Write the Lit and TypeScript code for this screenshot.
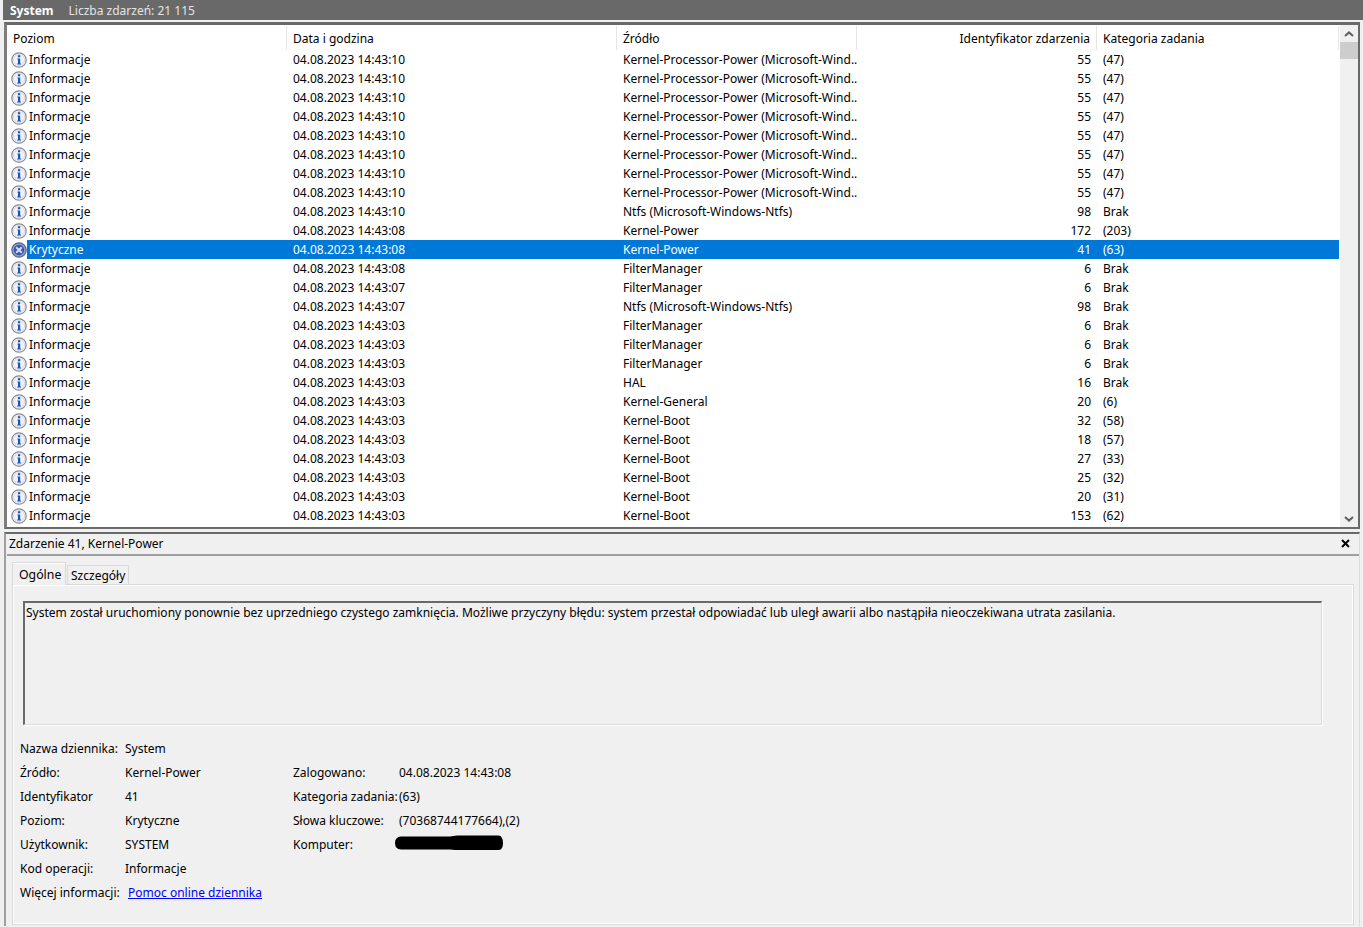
import { LitElement, html, css, svg } from "lit";
import { customElement } from "lit/decorators.js";

type Row = [string, string, string, string, string];
const P = "Kernel-Processor-Power (Microsoft-Wind...";
const N = "Ntfs (Microsoft-Windows-Ntfs)";
const F = "FilterManager";
const B = "Kernel-Boot";
const T0 = "04.08.2023 14:43:";
const rows: Row[] = [
  ...Array.from({ length: 8 }, (): Row => ["i", T0 + "10", P, "55", "(47)"]),
  ["i", T0 + "10", N, "98", "Brak"],
  ["i", T0 + "08", "Kernel-Power", "172", "(203)"],
  ["c", T0 + "08", "Kernel-Power", "41", "(63)"],
  ["i", T0 + "08", F, "6", "Brak"],
  ["i", T0 + "07", F, "6", "Brak"],
  ["i", T0 + "07", N, "98", "Brak"],
  ["i", T0 + "03", F, "6", "Brak"],
  ["i", T0 + "03", F, "6", "Brak"],
  ["i", T0 + "03", F, "6", "Brak"],
  ["i", T0 + "03", "HAL", "16", "Brak"],
  ["i", T0 + "03", "Kernel-General", "20", "(6)"],
  ["i", T0 + "03", B, "32", "(58)"],
  ["i", T0 + "03", B, "18", "(57)"],
  ["i", T0 + "03", B, "27", "(33)"],
  ["i", T0 + "03", B, "25", "(32)"],
  ["i", T0 + "03", B, "20", "(31)"],
  ["i", T0 + "03", B, "153", "(62)"],
];

const infoIcon = svg`<svg class="ico" width="16" height="16" viewBox="0 0 16 16">
  <circle cx="8" cy="8" r="7.2" fill="#fdfdfd" stroke="#8a8a8a" stroke-width="1.2"/>
  <circle cx="8" cy="8" r="5.6" fill="#eef2fa" stroke="#c9d2e4" stroke-width=".8"/>
  <rect x="6.9" y="3.2" width="2.3" height="2.1" fill="#1c55b8"/>
  <path d="M6.4 6.4H9.2V11.4H10V12.5H6.2V11.4H7V7.5H6.4Z" fill="#1c55b8"/>
</svg>`;
const critIcon = svg`<svg class="ico" width="16" height="16" viewBox="0 0 16 16">
  <circle cx="8" cy="8" r="7.2" fill="#8ea0c8" stroke="#5d6480" stroke-width="1.2"/>
  <circle cx="8" cy="8" r="5.2" fill="#3b55b0"/>
  <path d="M5.2 5.2L10.8 10.8M10.8 5.2L5.2 10.8" stroke="#d4dcf4" stroke-width="2"/>
</svg>`;

@customElement("app-root")
export class AppRoot extends LitElement {
  static styles = css`
    :host {
      display: block;
      width: 1363px;
      height: 927px;
      overflow: hidden;
      background: #f0f0f0;
      font-family: "Noto Sans", "Open Sans", sans-serif;
      font-size: 12px;
      color: #000;
      box-sizing: border-box;
      padding-left: 3px;
    }
    * { box-sizing: border-box; }
    .title {
      height: 20px;
      background: #696969;
      color: #fff;
      display: flex;
      align-items: center;
      padding-left: 7px;
      gap: 15px;
      border-bottom: 0;
      margin-right: 0;
    }
    .title b { font-weight: 700; }
    .title span { color: #e4e4e4; }
    .list {
      margin-top: 2px;
      height: 507px;
      margin-right: 2px;
      border: solid #696969;
      border-width: 3px 2px 2px 3px;
      border-left-color: #7d7d7d;
      background: #fff;
      display: flex;
      margin-left: 1px;
      margin-right: 3px;
    }
    .table { flex: 1; min-width: 0; padding-top: 1px; }
    .head, .row {
      display: grid;
      grid-template-columns: 280px 330px 240px 240px 1fr;
    }
    .head { height: 24px; align-items: center; }
    .head div {
      height: 24px;
      display: flex;
      align-items: center;
      padding-left: 6px;
      border-right: 1px solid #e5e5e5;
    }
    .head .num { justify-content: flex-end; padding-right: 6px; }
    .row { height: 19px; align-items: center; white-space: nowrap; }
    .row > div { padding-left: 6px; overflow: hidden; }
    .row .num { text-align: right; padding-right: 6px; }
    .row .lvl {
      display: flex;
      align-items: center;
      padding-left: 4px;
      height: 19px;
      gap: 2px;
      overflow: visible;
    }
    .ico { flex: none; }
    .sel { background: #0078d7; color: #fff; }
    .sel .lvl { background: linear-gradient(to right, #fff 20px, transparent 20px); }
    .row.sel .lvl span { color: #fff; }
    .scroll {
      width: 18px;
      flex: none;
      background: #f0f0f0;
      display: flex;
      flex-direction: column;
      margin-left: 1px;
    }
    .arrow { height: 17px; display: flex; align-items: center; justify-content: center; }
    .thumb { height: 17px; background: #cdcdcd; margin-right: 0; }
    .gap { flex: 1; }
    .detail {
      margin-top: 3px;
      margin-left: 1px;
      margin-right: 3px;
      height: 394px;
      border-top: 2px solid #696969;
      border-left: 2px solid #a0a0a0;
      border-right: 1px solid #dcdcdc;
      padding: 0 0 0 1px;
      position: relative;
    }
    .dhead {
      height: 22px;
      border-bottom: 2px solid #a0a0a0;
      display: flex;
      align-items: center;
      justify-content: space-between;
      padding: 0 9px 1px 2px;
      margin-right: 0;
      margin-left: 0;
    }
    .close { display: block; }
    .tabs { display: flex; margin: 6px 0 0 5px; align-items: flex-end; height: 23px; position: relative; z-index: 1; }
    .tab {
      height: 20px;
      padding: 0 3px;
      border: 1px solid #d9d9d9;
      border-bottom: 0;
      display: flex;
      align-items: center;
      margin-left: 1px;
    }
    .tab.on {
      height: 23px;
      width: 54px;
      margin-left: 0;
      padding: 0 6px;
      background: #f0f0f0;
      border-color: #d9d9d9;
      border-width: 1px 1px 0 1px;
      font-size: 12.3px;
      box-shadow: inset 0 1px 0 #fff;
    }
    .page {
      margin: -1px 5px 0 5px;
      height: 341px;
      border: 1px solid #d9d9d9;
      outline: 1px solid #fff;
      outline-offset: -2px;
      padding: 16px 31px 0 10px;
    }
    .msg {
      height: 124px;
      border: solid;
      border-width: 2px 1px 1px 2px;
      border-color: #696969 #dcdcdc #dcdcdc #696969;
      box-shadow: 1px 1px 0 #fff;
      padding: 1px 0 0 1px;
      line-height: 17px;
    }
    .meta {
      margin: 11px 0 0 -3px;
      display: grid;
      grid-template-columns: 105px 168px 106px auto;
      grid-auto-rows: 24px;
      align-items: center;
      justify-content: start;
    }
    a { color: #0000ff; text-decoration: underline; margin-left: 3px; white-space: nowrap; }
    .blob { display: block; margin: -2px 0 0 -4px; }
  `;

  private field(l: string, v: unknown) {
    return html`<div>${l}</div><div>${v}</div>`;
  }

  render() {
    return html`
      <div class="title"><b>System</b><span>Liczba zdarzeń: 21 115</span></div>
      <div class="list">
        <div class="table">
          <div class="head">
            <div>Poziom</div><div>Data i godzina</div><div>Źródło</div>
            <div class="num">Identyfikator zdarzenia</div><div>Kategoria zadania</div>
          </div>
          ${rows.map(
            (r) => html`<div class="row ${r[0] === "c" ? "sel" : ""}">
              <div class="lvl">${r[0] === "c" ? critIcon : infoIcon}<span>${r[0] === "c" ? "Krytyczne" : "Informacje"}</span></div>
              <div>${r[1]}</div><div>${r[2]}</div><div class="num">${r[3]}</div><div>${r[4]}</div>
            </div>`
          )}
        </div>
        <div class="scroll">
          <div class="arrow"><svg width="10" height="6" viewBox="0 0 10 6"><path d="M1 5L5 1.4L9 5" fill="none" stroke="#606060" stroke-width="2"/></svg></div>
          <div class="thumb"></div>
          <div class="gap"></div>
          <div class="arrow"><svg width="10" height="6" viewBox="0 0 10 6"><path d="M1 1L5 4.6L9 1" fill="none" stroke="#606060" stroke-width="2"/></svg></div>
        </div>
      </div>
      <div class="detail">
        <div class="dhead">
          <span>Zdarzenie 41, Kernel-Power</span>
          <svg class="close" width="9" height="9" viewBox="0 0 9 9"><path d="M1 1L8 8M8 1L1 8" stroke="#000" stroke-width="2"/></svg>
        </div>
        <div class="tabs">
          <div class="tab on">Ogólne</div>
          <div class="tab">Szczegóły</div>
        </div>
        <div class="page">
          <div class="msg">System został uruchomiony ponownie bez uprzedniego czystego zamknięcia. Możliwe przyczyny błędu: system przestał odpowiadać lub uległ awarii albo nastąpiła nieoczekiwana utrata zasilania.</div>
          <div class="meta">
            ${this.field("Nazwa dziennika:", "System")}<div></div><div></div>
            ${this.field("Źródło:", "Kernel-Power")}${this.field("Zalogowano:", "04.08.2023 14:43:08")}
            ${this.field("Identyfikator", "41")}${this.field("Kategoria zadania:", "(63)")}
            ${this.field("Poziom:", "Krytyczne")}${this.field("Słowa kluczowe:", "(70368744177664),(2)")}
            ${this.field("Użytkownik:", "SYSTEM")}${this.field(
              "Komputer:",
              svg`<svg class="blob" width="108" height="16" viewBox="0 0 108 16"><path d="M6 1.5H55L62 .5H104Q108 1.5 108 8T104 15H60L55 14.5H6Q0 14 0 8T6 1.5Z" fill="#000"/></svg>`
            )}
            ${this.field("Kod operacji:", "Informacje")}<div></div><div></div>
            ${this.field("Więcej informacji:", html`<a href="#">Pomoc online dziennika</a>`)}<div></div><div></div>
          </div>
        </div>
      </div>
    `;
  }
}
